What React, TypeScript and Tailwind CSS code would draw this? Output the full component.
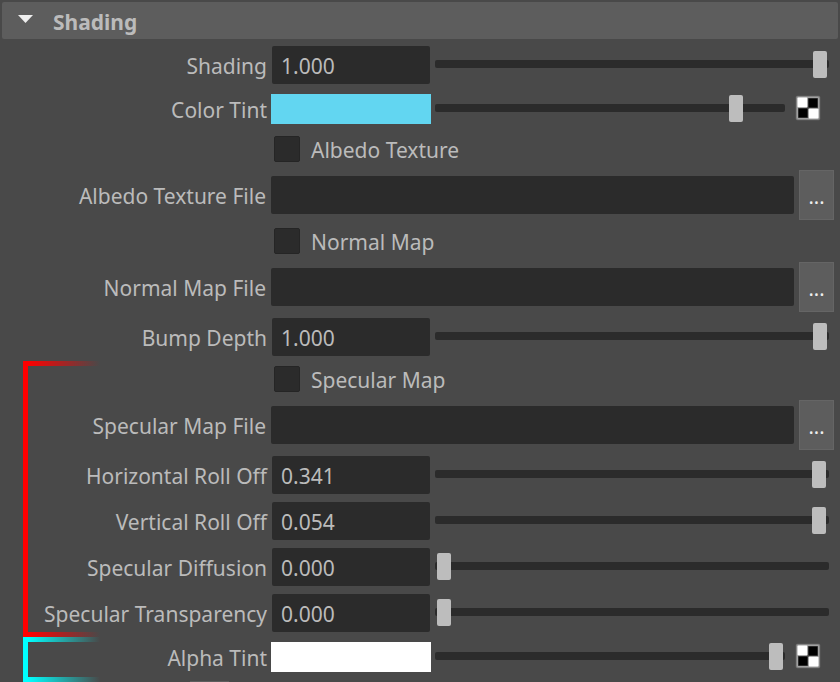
import React, { useId, useState } from "react";

const ROW_LABEL = "w-[267px] shrink-0 text-right whitespace-nowrap leading-[30px] pt-0.5";
const RANGE =
  "block h-[27px] w-full min-w-0 shrink-0 cursor-pointer appearance-none bg-transparent outline-none [&::-webkit-slider-runnable-track]:h-[27px] [&::-webkit-slider-runnable-track]:bg-transparent [&::-webkit-slider-thumb]:h-[27px] [&::-webkit-slider-thumb]:w-[14px] [&::-webkit-slider-thumb]:appearance-none [&::-webkit-slider-thumb]:rounded-xs [&::-webkit-slider-thumb]:bg-[#bdbdbd]";

function Slider({ label, position }: { label: string; position: number }) {
  const [value, setValue] = useState(position);
  return (
    <div className="mb-0.5 ml-1 flex h-2 min-w-0 flex-1 items-center rounded-xs bg-[#2b2b2b] px-0.5">
      <input
        type="range"
        aria-label={label}
        min={0}
        max={1000}
        value={value}
        onChange={(e) => setValue(Number(e.target.value))}
        className={RANGE}
      />
    </div>
  );
}

function NumberRow({ label, value, position }: { label: string; value: string; position: number }) {
  const id = useId();
  return (
    <div className="flex h-[46px] items-center pr-[11px]">
      <label htmlFor={id} className={ROW_LABEL}>
        {label}
      </label>
      <div className="ml-1 w-40 shrink-0 px-px">
        <input
          id={id}
          type="text"
          defaultValue={value}
          className="block h-[38px] w-full rounded-xs bg-[#2b2b2b] px-[9px] pt-0.5 outline-none"
        />
      </div>
      <Slider label={`${label} amount`} position={position} />
    </div>
  );
}

function CheckerIcon() {
  return (
    <svg viewBox="0 0 26 26" className="block size-[26px]" aria-hidden="true">
      <rect x="0.5" y="0.5" width="25" height="25" rx="2" fill="#5c5c5c" />
      <rect x="1" y="1" width="24" height="24" rx="2" fill="#858585" />
      <rect x="2" y="2" width="22" height="22" rx="1" fill="#a0a0a0" />
      <rect x="3" y="3" width="20" height="20" fill="#555" />
      <rect x="2.5" y="2.5" width="10" height="10" rx="1" fill="#fff" />
      <rect x="13.5" y="13.5" width="10" height="10" rx="1" fill="#fff" />
      <rect x="13.5" y="3.5" width="9" height="9" fill="#000" />
      <rect x="3.5" y="13.5" width="9" height="9" fill="#000" />
    </svg>
  );
}

function ColorRow({ label, color, position }: { label: string; color: string; position: number }) {
  const id = useId();
  return (
    <div className="flex h-[42px] items-center pr-[19px]">
      <label htmlFor={id} className={ROW_LABEL}>
        {label}
      </label>
      <button id={id} type="button" className={`ml-1 h-[30px] w-40 shrink-0 ${color}`} />
      <Slider label={`${label} brightness`} position={position} />
      <button type="button" aria-label={`Map ${label}`} className="mb-0.5 ml-2.5 shrink-0">
        <CheckerIcon />
      </button>
    </div>
  );
}

function CheckRow({ label }: { label: string }) {
  return (
    <div className="flex h-[38px] items-center pl-[274px]">
      <label className="flex items-center">
        <input
          type="checkbox"
          className="size-[26px] appearance-none rounded-xs border border-[#252525] bg-[#2b2b2b] checked:bg-[#bdbdbd]"
        />
        <span className="pl-[11px] pt-0.5 leading-[30px]">{label}</span>
      </label>
    </div>
  );
}

function FileRow({ label }: { label: string }) {
  const id = useId();
  return (
    <div className="flex h-[54px] items-center pr-1.5">
      <label htmlFor={id} className={`${ROW_LABEL} pr-px`}>
        {label}
      </label>
      <input
        id={id}
        type="text"
        className="ml-1 h-[38px] min-w-0 flex-1 rounded-xs bg-[#2b2b2b] px-[9px] pt-0.5 outline-none"
      />
      <button
        type="button"
        aria-label={`Browse ${label}`}
        className="ml-[5px] h-[50px] w-[35px] shrink-0 border border-[#656565] bg-[#5d5d5d] pt-1 text-[20px] leading-[30px] text-[#eee]"
      >
        ...
      </button>
    </div>
  );
}

function Bracket({ side, fade, place }: { side: string; fade: string; place: string }) {
  return (
    <div className={`pointer-events-none absolute left-[23px] w-[77px] border-l-5 ${side} ${place}`}>
      <div className={`absolute inset-x-0 top-0 h-[5px] bg-linear-to-r to-transparent ${fade}`} />
      <div className={`absolute inset-x-0 bottom-0 h-[5px] bg-linear-to-r to-transparent ${fade}`} />
    </div>
  );
}

export default function App() {
  const [open, setOpen] = useState(true);
  return (
    <main className="min-h-screen overflow-hidden bg-[#494949] pt-0.5 font-['Noto_Sans','Open_Sans',sans-serif] text-[21px] text-[#bbb]">
      <h2 className="mx-0.5 mb-[3px]">
        <button
          type="button"
          aria-expanded={open}
          onClick={() => setOpen(!open)}
          className="flex h-[37px] w-full items-center rounded-xs bg-[#5d5d5d] pl-4 text-left font-bold"
        >
          <svg viewBox="0 0 15 8" className="mb-1 h-2 w-[15px]" aria-hidden="true">
            <path d="M0 0H15L7.5 8Z" fill="#eee" />
          </svg>
          <span className="pl-5 pt-0.5 leading-[30px]">Shading</span>
        </button>
      </h2>
      {open && (
        <>
          <NumberRow label="Shading" value="1.000" position={1000} />
          <ColorRow label="Color Tint" color="bg-[#62d6f1]" position={880} />
          <CheckRow label="Albedo Texture" />
          <FileRow label="Albedo Texture File" />
          <CheckRow label="Normal Map" />
          <FileRow label="Normal Map File" />
          <NumberRow label="Bump Depth" value="1.000" position={1000} />
          <section className="relative">
            <Bracket side="border-[#f00]" fade="from-[#f00]" place="top-px -bottom-px" />
            <CheckRow label="Specular Map" />
            <FileRow label="Specular Map File" />
            <NumberRow label="Horizontal Roll Off" value="0.341" position={997} />
            <NumberRow label="Vertical Roll Off" value="0.054" position={997} />
            <NumberRow label="Specular Diffusion" value="0.000" position={0} />
            <NumberRow label="Specular Transparency" value="0.000" position={0} />
          </section>
          <section className="relative">
            <Bracket side="border-[#0ff]" fade="from-[#0ff]" place="top-px -bottom-1" />
            <ColorRow label="Alpha Tint" color="bg-white" position={1000} />
          </section>
          <div className="pl-[190px] pt-[3px]">
            <div className="h-px w-[39px] bg-[#5d5d5d]" />
          </div>
        </>
      )}
    </main>
  );
}
